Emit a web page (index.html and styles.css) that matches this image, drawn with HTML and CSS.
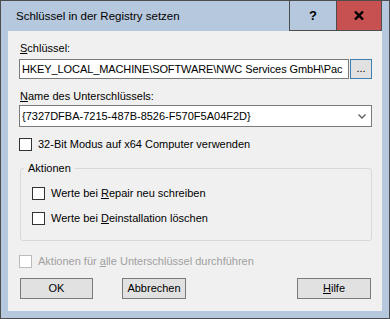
FILE: index.html
```html
<!DOCTYPE html>
<html lang="de">
<head>
    <meta charset="UTF-8">
    <title>Schlüssel in der Registry setzen</title>
    <link rel="stylesheet" href="styles.css">
</head>
<body>
    <div class="window">
        <div class="titlebar">
            <span class="title">Schlüssel in der Registry setzen</span>
            <div class="caption-btns">
                <div class="cap-btn help">?</div>
                <div class="cap-btn close">
                    <svg width="10" height="9" viewBox="0 0 10 9">
                        <path d="M1 0.5 L9 8.5 M9 0.5 L1 8.5" stroke="#000" stroke-width="2.4" fill="none"/>
                    </svg>
                </div>
            </div>
        </div>

        <div class="frame">
            <div class="client">
                <div class="label first"><u>S</u>chlüssel:</div>
                <div class="key-row">
                    <div class="textfield">HKEY_LOCAL_MACHINE\SOFTWARE\NWC Services GmbH\Pac</div>
                    <div class="browse-btn">...</div>
                </div>

                <div class="label second"><u>N</u>ame des Unterschlüssels:</div>
                <div class="combo">
                    <span class="combo-text">{7327DFBA-7215-487B-8526-F570F5A04F2D}</span>
                    <svg class="combo-arrow" width="8" height="5" viewBox="0 0 8 5">
                        <path d="M0.5 0.5 L4 4 L7.5 0.5" stroke="#606060" stroke-width="1.4" fill="none"/>
                    </svg>
                </div>

                <div class="check-row mode-row">
                    <span class="box"></span>
                    <span>32-Bit Modus auf x64 Computer verwenden</span>
                </div>

                <fieldset class="group">
                    <legend>Aktionen</legend>
                    <div class="check-row">
                        <span class="box"></span>
                        <span>Werte bei <u>R</u>epair neu schreiben</span>
                    </div>
                    <div class="check-row second-check">
                        <span class="box"></span>
                        <span>Werte bei <u>D</u>einstallation löschen</span>
                    </div>
                </fieldset>

                <div class="check-row disabled all-row">
                    <span class="box"></span>
                    <span>Aktionen für <u>a</u>lle Unterschlüssel durchführen</span>
                </div>

                <div class="button-row">
                    <div class="btn ok">OK</div>
                    <div class="btn cancel">Abbrechen</div>
                    <div class="btn help-btn"><u>H</u>ilfe</div>
                </div>
            </div>
        </div>
    </div>
</body>
</html>
```

FILE: styles.css
```css
* {
    margin: 0;
    padding: 0;
    box-sizing: border-box;
}

body {
    font-family: 'Liberation Sans', Arial, sans-serif;
    font-size: 11px;
    color: #000;
    background: #fff;
}

u {
    text-decoration: underline;
    text-underline-offset: 1px;
}

.window {
    width: 390px;
    height: 319px;
    border: 1px solid #4d4d4d;
    background: #b6c8dd;
    display: flex;
    flex-direction: column;
}

/* title bar */
.titlebar {
    height: 30px;
    display: flex;
    align-items: flex-start;
}

.title {
    padding: 8px 0 0 15px;
    font-size: 11.5px;
    line-height: 14px;
    color: #000;
}

.caption-btns {
    margin-left: auto;
    margin-right: 7px;
    margin-top: -1px;
    display: flex;
}

.cap-btn {
    height: 31px;
    border: 1px solid #4d4d4d;
    display: flex;
    align-items: center;
    justify-content: center;
}

.cap-btn.help {
    width: 47px;
    border-right: none;
    font-weight: bold;
    font-size: 13px;
    padding-bottom: 1px;
}

.cap-btn.close {
    width: 46px;
    background: #c75050;
}

/* window body */
.frame {
    flex: 1;
    padding: 0 7px 7px 7px;
    display: flex;
}

.client {
    flex: 1;
    background: #f0f0f0;
}

.label {
    line-height: 13px;
    margin-left: 12px;
}

.label.first {
    margin-top: 11px;
}

.label.second {
    margin-top: 11px;
}

.key-row {
    display: flex;
    gap: 1px;
    margin: 4px 0 0 11px;
}

.textfield {
    width: 330px;
    height: 20px;
    border: 1px solid #7a7a7a;
    background: #fff;
    padding-left: 2px;
    line-height: 18px;
    letter-spacing: -0.1px;
    white-space: nowrap;
    overflow: hidden;
}

.browse-btn {
    width: 22px;
    height: 20px;
    border: 1px solid #3c7fb1;
    background: #e1e1e1;
    text-align: center;
    line-height: 16px;
}

.combo {
    width: 353px;
    height: 22px;
    margin: 2px 0 0 11px;
    border: 1px solid #7a7a7a;
    background: #fff;
    display: flex;
    align-items: center;
    padding: 0 5px 0 2px;
}

.combo-text {
    flex: 1;
    line-height: 20px;
}

.combo-arrow {
    margin-top: 1px;
}

/* checkboxes */
.check-row {
    display: flex;
    align-items: center;
    gap: 6px;
    height: 13px;
    line-height: 13px;
    white-space: nowrap;
}

.check-row .box {
    width: 13px;
    height: 13px;
    border: 1px solid #333;
    background: #fff;
}

.mode-row {
    margin: 11px 0 0 11px;
}

.group {
    width: 352px;
    margin: 10px 0 0 12px;
    border: 1px solid #d5d9dd;
    border-radius: 3px;
    padding: 12px 0 15px 3px;
}

.group legend {
    padding: 0 4px;
    line-height: 14px;
}

.group .check-row {
    margin-left: 8px;
}

.group .second-check {
    margin-top: 12px;
}

.all-row {
    margin: 14px 0 0 11px;
}

.check-row.disabled {
    color: #a0a0a0;
}

.check-row.disabled .box {
    border-color: #bcbcbc;
}

/* bottom buttons */
.button-row {
    display: flex;
    margin: 10px 0 0 12px;
}

.btn {
    height: 21px;
    border: 1px solid #7a7a7a;
    background: #e1e1e1;
    text-align: center;
    line-height: 19px;
}

.btn.ok {
    width: 73px;
}

.btn.cancel {
    width: 64px;
    margin-left: 29px;
}

.btn.help-btn {
    width: 74px;
    margin-left: 111px;
}
```
